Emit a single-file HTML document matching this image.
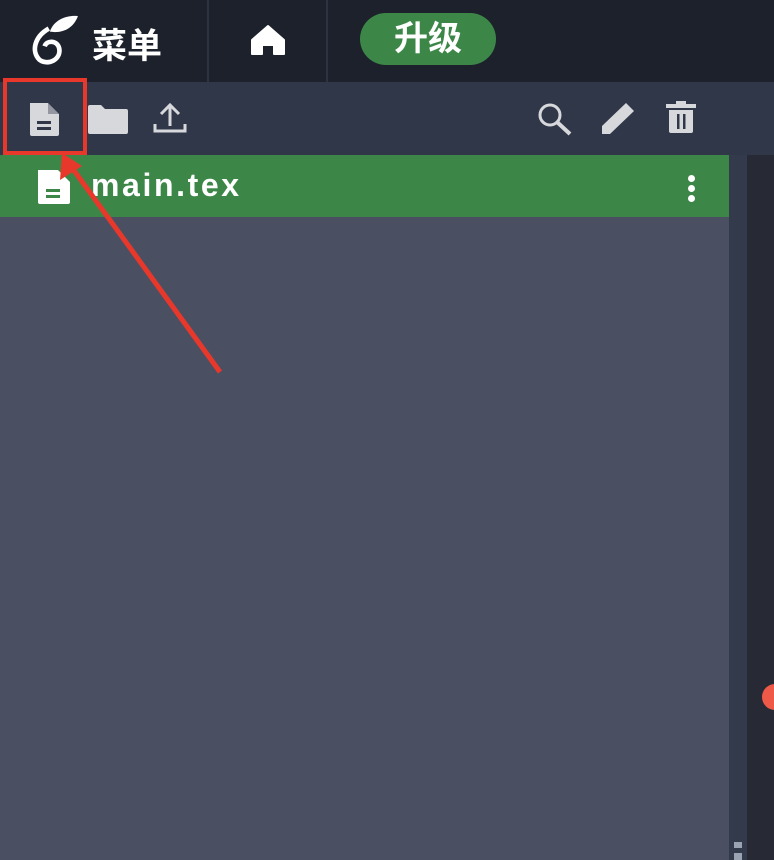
<!DOCTYPE html>
<html><head><meta charset="utf-8"><style>
body{margin:0;width:774px;height:860px;overflow:hidden;background:#4a5061;position:relative;font-family:"Liberation Sans","Noto Sans CJK SC",sans-serif}
.a{position:absolute}
</style></head><body>
<div class="a" style="left:0;top:0;width:774px;height:82px;background:#1c212b"></div>
<div class="a" style="left:207px;top:0;width:2px;height:82px;background:#2c3240"></div>
<div class="a" style="left:326px;top:0;width:2px;height:82px;background:#2c3240"></div>
<svg class="a" style="left:28px;top:14px" width="52" height="52" viewBox="0 0 50 50"><path d="M20 14 C6 22 3 36 11 44 C19 50 32 44 30 33 C28 25 18 25 16 31" fill="none" stroke="#fff" stroke-width="4.5"/><path d="M21 17 C25 5 38 1 48 2 C44 13 34 19 21 17Z" fill="#fff"/></svg>
<div class="a" style="left:92px;top:18px;color:#fff;font-size:35px;font-weight:bold">菜单</div>
<svg class="a" style="left:250px;top:24px" width="36" height="32" viewBox="0 0 36 32"><path d="M18 2 L34 16 V30 H24 V21 H12 V30 H2 V16Z" fill="#fff" stroke="#fff" stroke-linejoin="round" stroke-width="2"/></svg>
<div class="a" style="left:360px;top:13px;width:136px;height:52px;border-radius:26px;background:#3c8748;color:#fff;font-size:34px;font-weight:bold;text-align:center;line-height:52px">升级</div>
<div class="a" style="left:0;top:82px;width:774px;height:73px;background:#2f3749"></div>
<svg class="a" style="left:26px;top:100px" width="36" height="38" viewBox="0 0 36 38"><path d="M4 3 H22 L33 14 V34 Q33 36 31 36 H6 Q4 36 4 34Z" fill="#d7d8dc"/><path d="M22 3 V14 H33" fill="#2f3749" opacity=".4"/><rect x="11" y="21" width="14" height="3" fill="#2f3749"/><rect x="11" y="27" width="14" height="3" fill="#2f3749"/></svg>
<svg class="a" style="left:87px;top:104px" width="42" height="30" viewBox="0 0 42 30"><path d="M1 3 Q1 1 3 1 H14 L18 5 H39 Q41 5 41 7 V28 Q41 30 39 30 H3 Q1 30 1 28Z" fill="#d7d8dc"/></svg>
<svg class="a" style="left:152px;top:102px" width="36" height="32" viewBox="0 0 36 32"><path d="M18 24 V3 M9 12 L18 3 L27 12 M3 22 V29 H33 V22" fill="none" stroke="#d7d8dc" stroke-width="3"/></svg>
<svg class="a" style="left:535px;top:102px" width="40" height="34" viewBox="0 0 40 34"><circle cx="15" cy="13" r="10" fill="none" stroke="#d7d8dc" stroke-width="3"/><path d="M22 20 L35 32" stroke="#d7d8dc" stroke-width="4"/></svg>
<svg class="a" style="left:598px;top:100px" width="40" height="36" viewBox="0 0 40 36"><path d="M4 34 V26 L28 3 L36 11 L12 34Z" fill="#d7d8dc"/></svg>
<svg class="a" style="left:664px;top:101px" width="34" height="34" viewBox="0 0 34 34"><rect x="2" y="3" width="30" height="4" fill="#d7d8dc"/><rect x="12" y="0" width="10" height="4" fill="#d7d8dc"/><path d="M5 9 H29 V30 Q29 32 27 32 H7 Q5 32 5 30Z" fill="#d7d8dc"/><rect x="13" y="13" width="2.5" height="15" fill="#2f3749"/><rect x="19" y="13" width="2.5" height="15" fill="#2f3749"/></svg>
<div class="a" style="left:0;top:155px;width:729px;height:62px;background:#3c8748"></div>
<svg class="a" style="left:36px;top:168px" width="36" height="38" viewBox="0 0 36 38"><path d="M2 2 H22 L34 14 V34 Q34 36 32 36 H4 Q2 36 2 34Z" fill="#fff"/><rect x="10" y="21" width="14" height="3" fill="#3c8748"/><rect x="10" y="27" width="14" height="3" fill="#3c8748"/></svg>
<div class="a" style="left:91px;top:167px;color:#fff;font-size:32px;font-weight:bold;letter-spacing:2.6px">main.tex</div>
<div class="a" style="left:688px;top:175px;width:7px;height:7px;border-radius:50%;background:#fff;box-shadow:0 10px 0 #fff,0 20px 0 #fff"></div>
<div class="a" style="left:729px;top:155px;width:18px;height:705px;background:#323a4b"></div>
<div class="a" style="left:747px;top:155px;width:27px;height:705px;background:#272a35"></div>
<div class="a" style="left:762px;top:684px;width:26px;height:26px;border-radius:50%;background:#ee5a47"></div>
<div class="a" style="left:734px;top:842px;width:8px;height:6px;background:#9aa3b2"></div>
<div class="a" style="left:734px;top:853px;width:8px;height:7px;background:#9aa3b2"></div>
<div class="a" style="left:3px;top:78px;width:76px;height:69px;border:4px solid #e8382c"></div>
<svg class="a" style="left:0;top:0" width="774" height="860"><line x1="220" y1="372" x2="70" y2="165" stroke="#e8382c" stroke-width="5"/><path d="M62 153 L60 180 L82 166Z" fill="#e8382c"/></svg>
</body></html>
